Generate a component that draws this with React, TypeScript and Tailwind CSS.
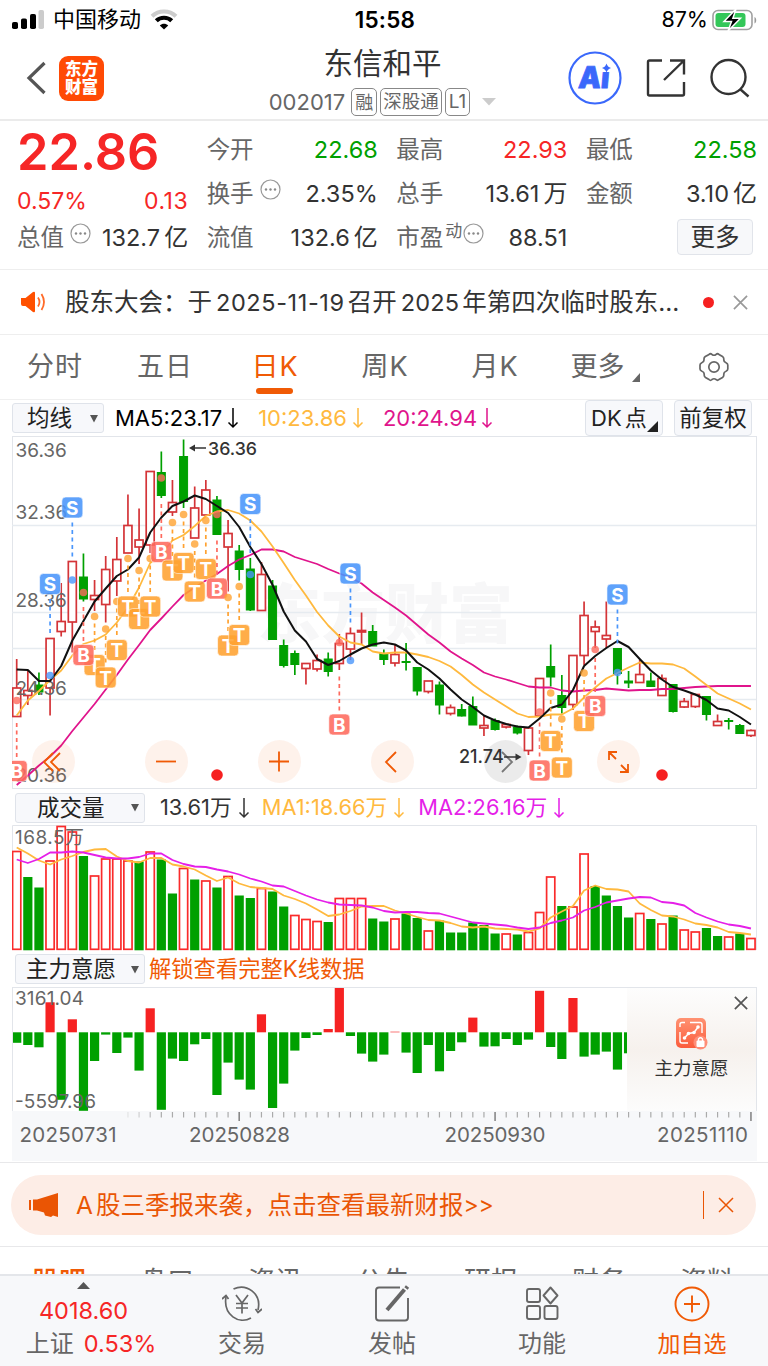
import type { ReactNode } from "react";

type Candle = [high: number, top: number, bottom: number, low: number, up: 0 | 1];

const STEP = 11.125;
const xOf = (i: number) => 16.7 + i * STEP;
const toPoints = (ys: number[]) => ys.map((y, i) => `${xOf(i)},${y}`).join(" ");

const candles: Candle[] = [
  [659, 688, 716.5, 716.5, 1], [670, 690.5, 695.5, 705, 1], [672.5, 685, 692, 695, 0], [638.5, 638.5, 688, 715.5, 1],
  [583, 621.5, 631.5, 636.5, 1], [561, 561.5, 622, 652.5, 1], [553.5, 577, 599, 601.5, 0], [580, 595.5, 599.5, 611, 1],
  [556, 569.5, 604.5, 622.5, 1], [537, 559.5, 581, 596, 1], [494.5, 525.5, 553, 553, 1], [508.5, 540, 547, 564, 1],
  [471.5, 471.5, 545, 553, 1], [451.5, 472.5, 495.5, 498, 0], [480, 502.5, 512, 516, 1], [439.5, 456.5, 501.5, 508, 0],
  [486.5, 508, 538, 538, 1], [480, 490, 515, 515, 1], [496, 500, 534.5, 534.5, 0], [520, 533.5, 547, 591.5, 1],
  [545, 551, 569.5, 580.5, 0], [558, 569, 610, 611, 0], [562, 574.5, 610.5, 610.5, 1], [580, 586, 639.5, 639.5, 0],
  [639.5, 645.5, 665.5, 667.5, 0], [650.5, 653.5, 664.5, 675, 0], [663.5, 663.5, 668.5, 684.5, 1], [654.5, 660.5, 669, 671.5, 1],
  [652.5, 659, 671.5, 676.5, 0], [634, 643.5, 663.5, 670, 1], [627.5, 633.5, 649, 660, 1], [612.5, 630.5, 632, 645, 1],
  [625, 631.5, 646, 646, 0], [649.5, 653.5, 659.5, 665, 0], [644.5, 654.5, 663, 666.5, 1], [643, 661.5, 662.5, 670.5, 0],
  [667, 667.5, 691, 695.5, 0], [681, 681, 691.5, 693.5, 1], [681.5, 685, 705, 714.5, 0], [704.5, 707.5, 713.5, 715.5, 1],
  [704, 709.5, 716, 716.5, 0], [696.5, 706.5, 725, 725, 0], [716, 725.5, 728, 736, 1], [718.5, 720.5, 729.5, 730.5, 0],
  [723.5, 724.5, 727, 728.5, 1], [725.5, 727, 733, 734.5, 0], [727, 728, 750.5, 755, 1], [678.5, 678.5, 716, 716, 1],
  [644.5, 666.5, 677, 686.5, 0], [675, 695.5, 707.5, 713.5, 0], [655.5, 655.5, 704.5, 710, 1], [601.5, 615.5, 655.5, 665, 1],
  [620.5, 627, 631.5, 648, 1], [601.5, 635.5, 639, 648, 1], [648.5, 648.5, 673.5, 684.5, 0], [671, 681, 683, 688, 0],
  [660, 674.5, 682.5, 682.5, 1], [672.5, 681, 686.5, 686.5, 0], [674.5, 678.5, 695.5, 695.5, 1], [684.5, 684.5, 711.5, 712.5, 0],
  [698, 701.5, 707, 708, 1], [694.5, 694.5, 706.5, 708, 1], [696.5, 696.5, 714.5, 720.5, 0], [714.5, 721.5, 725.5, 725.5, 1],
  [718, 720.5, 721.5, 729.5, 0], [724, 725.5, 733.5, 733.5, 0], [729.5, 730.5, 735.5, 737, 1],
];

const ma5 = [
  669.5, 670, 681, 681, 666, 640.5, 621, 601.5, 588.5, 576, 569.5, 557.5, 532.5, 517.5, 506, 501.5, 495.5, 499, 506, 513, 527,
  547, 564, 585, 611.5, 630.5, 641.5, 659, 665, 661, 654.5, 648.5, 644.5, 642.5, 644.5, 650.5, 662.5, 669.5, 678.5, 689.5,
  699.5, 707, 715.5, 720.5, 724, 726.5, 727.5, 718.5, 708, 704.5, 690, 666, 656, 648, 641, 647, 659, 670.5, 679.5, 687, 690.5,
  694.5, 700, 708.5, 710.5, 717, 724.5,
];
const ma10 = [
  715.5, 700.5, 691, 680, 670.5, 655.5, 644, 640.5, 634.5, 622.5, 607.5, 587.5, 563, 554, 540.5, 535, 526, 516, 511.5, 510,
  513.5, 520.5, 531.5, 546.5, 563, 580, 595.5, 612, 625.5, 636.5, 642.5, 644.5, 651.5, 653.5, 652.5, 652.5, 654.5, 657, 661,
  666.5, 675, 684.5, 692.5, 699.5, 706.5, 713.5, 717, 716.5, 714.5, 714.5, 708.5, 697.5, 687.5, 678.5, 673, 667.5, 662.5, 663.5,
  663.5, 664.5, 668.5, 676.5, 685, 693.5, 698.5, 703.5, 709.5,
];
const ma20 = [
  785, 775.5, 765.5, 756.5, 745.5, 731, 717.5, 704, 689.5, 675, 659.5, 645, 630, 618.5, 606.5, 595, 587.5, 580.5, 574, 566,
  559.5, 555, 549.5, 549.5, 551.5, 557, 560.5, 564, 569, 573.5, 577.5, 583.5, 592.5, 600, 607.5, 615.5, 625, 634.5, 642.5,
  651.5, 658.5, 665, 672.5, 676.5, 679.5, 683, 686.5, 687.5, 687.5, 690.5, 691.5, 690.5, 690, 688.5, 689.5, 690.5, 690, 690,
  689, 689, 688, 687, 686.5, 686, 686, 686, 686,
];

// kind, bar index, dot y, badge y
const marks: [string, number, number, number][] = [
  ["B", 0, 700.5, 771], ["T", 7, 616.5, 665], ["T", 8, 629, 677.5], ["T", 9, 601.5, 650], ["T", 10, 558.5, 606.5],
  ["T", 11, 570.5, 619], ["T", 12, 558.5, 606.5], ["B", 6, 592.5, 655], ["B", 13, 478, 552], ["T", 14, 522.5, 570.5],
  ["T", 15, 514.5, 563], ["T", 16, 544, 591.5], ["T", 17, 520.5, 569], ["B", 18, 514.5, 588.5], ["T", 19, 597.5, 645.5],
  ["T", 20, 586.5, 635], ["B", 29, 642.5, 724.5], ["B", 47, 712, 770.5], ["T", 48, 693, 741], ["T", 49, 719, 767.5],
  ["T", 51, 673, 721], ["B", 52, 649.5, 706], ["S", 3, 675.5, 584], ["S", 5, 580, 507.5], ["S", 21, 574.5, 504],
  ["S", 30, 660.5, 573.5], ["S", 54, 672.5, 594.5],
];
const markColors: Record<string, string> = { S: "#4a96fb", B: "#fe6a5e", T: "#ffa231" };

// top of each volume bar, negative when the bar is green
const volumes = [
  851.5, -877, -887.5, 861, 826.5, 832, -856, 876, 859, 859, 861, -861.5, 852, -859.5, -893.5, 868.5, -879.5, 881, -887.5,
  876.5, -895.5, -898, 888.5, -891.5, -906.5, 915.5, 919.5, 921.5, -922, 898.5, 898.5, 898.5, -918.5, -921.5, 919, -913.5,
  -918, 931, -920.5, -932.5, -932.5, -922.5, -925, -933.5, 934, -934.5, 932.5, 912.5, 877, -906, 907, 854, -886, -895.5, -906,
  -917.5, 913.5, -919, 924, -915.5, 930, 932, -928, -936, 937, -933.5, 938.5,
];
const volMa1 = [
  847.5, 853.5, 860.5, 864.5, 859.5, 856, 852, 849.5, 849, 856.5, 861, 862.5, 858, 858, 864.5, 866.5, 869.5, 875.5, 881, 877.5,
  883.5, 887, 888, 889, 895.5, 899, 903.5, 909.5, 916, 914.5, 911, 906.5, 906, 906, 910.5, 913.5, 917, 920, 920.5, 923, 926.5,
  927.5, 926.5, 928.5, 929, 929.5, 931.5, 928.5, 917.5, 911.5, 906, 890.5, 885.5, 889, 889.5, 891.5, 903.5, 910, 915.5, 916.5,
  919.5, 923.5, 925, 927.5, 932, 933, 934.5,
];
const volMa2 = [
  859.5, 863, 859, 852.5, 852.5, 851.5, 852.5, 855, 857.5, 858.5, 858.5, 857, 853.5, 853.5, 860, 864, 866.5, 867, 869.5, 871.5,
  874.5, 878.5, 881.5, 885.5, 886.5, 891, 895.5, 899.5, 902.5, 904.5, 905, 905.5, 907.5, 911, 912.5, 912, 912, 913, 913.5,
  916.5, 919.5, 922.5, 923.5, 924.5, 925.5, 927.5, 929, 927.5, 923, 920.5, 917.5, 910.5, 907, 902.5, 900.5, 898.5, 897, 897.5,
  902, 903, 905.5, 913, 917.5, 921.5, 924.5, 926, 928.5,
];

const flows = [
  -10.5, -12.7, -15, 30, -67.5, 13, -78.5, -28.7, -2.3, -20.7, -5.3, -38.3, 24, -77.5, -26.3, -28.7, -12, -6.7, -62.7, -30.3,
  -47.3, -57.3, 18, -75.7, -51.3, -18.3, -5.7, -2.7, 3.3, 44.5, -3.7, -21.3, -29.3, -22.3, 0.6, -20.3, -40.7, -12.7, -39,
  -18.7, -10, 14.7, -14.3, -14, -6.7, -12.7, -7.3, 41.5, -14.7, -26.7, 34.3, -24.3, -22.3, -19.3, -37.3, -21,
];

function Down() {
  return (
    <svg width="12" height="22" viewBox="0 0 12 22" fill="none" stroke="currentColor" strokeWidth="1.5">
      <path d="M6 1v19M1.5 15.5 6 20l4.5-4.5" />
    </svg>
  );
}

function Dots({ className = "" }: { className?: string }) {
  return (
    <svg className={className} width="21" height="21" viewBox="0 0 21 21">
      <circle cx="10.5" cy="10.5" r="9.5" fill="none" stroke="#999" strokeWidth="1.2" />
      <g fill="#888">
        <circle cx="6" cy="10.5" r="1.2" />
        <circle cx="10.5" cy="10.5" r="1.2" />
        <circle cx="15" cy="10.5" r="1.2" />
      </g>
    </svg>
  );
}

function Cross({ size, color, width = 1.8 }: { size: number; color: string; width?: number }) {
  return (
    <svg width={size} height={size} viewBox="0 0 16 16" fill="none" stroke={color} strokeWidth={width}>
      <path d="M1 1l14 14M15 1L1 15" />
    </svg>
  );
}

function Quote({ label, value, unit, color = "text-[#333]", extra }: { label: string; value: string; unit?: string; color?: string; extra?: ReactNode }) {
  return (
    <div className="flex h-11 items-center justify-between whitespace-nowrap">
      <span className="flex items-center text-[23.5px] text-[#666]">
        {label}
        {extra}
      </span>
      <span className={`text-[23.5px] ${color}`}>
        {value}
        {unit && <span className="ml-[4px] text-[24px]">{unit}</span>}
      </span>
    </div>
  );
}

function Picker({ label, className }: { label: string; className: string }) {
  return (
    <div className={`relative flex h-[30px] items-center rounded-[3px] border border-[#dfe3ea] bg-[#f7f8fb] text-[22.5px] text-[#222] ${className}`}>
      <span>{label}</span>
      <svg className="absolute right-1" width="10" height="9" viewBox="0 0 10 9">
        <path d="M1 1h8L5 8.5z" fill="#555" />
      </svg>
    </div>
  );
}

function StatusBar() {
  return (
    <div className="flex h-[41px] items-center justify-between pb-[2px] pl-3 pr-[10px] text-[22px] text-black">
      <div className="flex w-[240px] items-center">
        <svg width="32" height="19" viewBox="0 0 32 19">
          <rect x="0" y="12" width="6" height="7" rx="1.8" />
          <rect x="9" y="8.5" width="6" height="10.5" rx="1.8" />
          <rect x="18" y="4" width="6" height="15" rx="1.8" />
          <rect x="26.5" y="0" width="5.5" height="19" rx="1.8" fill="#ccc" />
        </svg>
        <span className="ml-[9px]">中国移动</span>
        <svg className="ml-[9px]" width="28" height="21" viewBox="0 0 28 21">
          <path d="M2 7.2C8.5.8 19.5.8 26 7.2" fill="none" stroke="#ccc" strokeWidth="4" />
          <path d="M6.3 11.8c4.2-4.1 11.2-4.1 15.4 0" fill="none" stroke="#000" strokeWidth="4.2" />
          <path d="M9.8 16.4c2.4-2.2 6-2.2 8.4 0L14 20.6z" />
        </svg>
      </div>
      <span className="text-[22.500px] font-semibold tracking-[0.2px]">15:58</span>
      <div className="flex w-[240px] items-center justify-end">
        <span className="text-[21.500px]">87%</span>
        <svg className="ml-[4px]" width="46" height="24" viewBox="0 0 46 24">
          <rect x="1" y="2.5" width="39" height="19" rx="5" fill="none" stroke="#a0a0a0" strokeWidth="1.6" />
          <rect x="3.5" y="5" width="30" height="14" rx="3" fill="#34c759" />
          <path d="M42.5 9v6.5c2.3-.8 2.3-5.7 0-6.5" fill="#999" />
          <path d="M24 1 12 13.5h7.5L16 23l12.5-12.8h-7.6z" stroke="#fff" strokeWidth="1.5" />
        </svg>
      </div>
    </div>
  );
}

function Header() {
  return (
    <header className="flex h-20 justify-between border-b-2 border-[#ebebeb] pl-[26px] pr-[18px]">
      <div className="flex w-[171px] items-center pb-1">
        <svg width="20" height="34" viewBox="0 0 20 34" fill="none" stroke="#555" strokeWidth="3.2">
          <path d="M18.500 2 3 17l15.500 15" />
        </svg>
        <div className="ml-[13px] flex h-[45px] w-[45px] flex-col items-center justify-center rounded-[9px] bg-[#ff4a05] text-[16.5px] font-black leading-[18px] text-white">
          <span>东方</span>
          <span>财富</span>
        </div>
      </div>
      <div className="flex flex-col items-center">
        <div className="h-[45px] text-[29.500px] leading-[44px] text-[#333]">东信和平</div>
        <div className="flex h-[32px] items-center gap-[3px] text-[20px] text-[#666]">
          <span className="mr-[3px] text-[22px]">002017</span>
          <span className="flex h-[28px] items-center rounded-[5px] border border-[#888] px-[3px] text-[18px]">融</span>
          <span className="flex h-[28px] items-center rounded-[5px] border border-[#888] px-[2px] text-[18.500px]">深股通</span>
          <span className="flex h-[28px] items-center rounded-[5px] border border-[#888] px-[3px] text-[19px]">L1</span>
          <svg className="ml-[9px]" width="14" height="8" viewBox="0 0 14 8">
            <path d="M0 0h14L7 7.500z" fill="#ccc" />
          </svg>
        </div>
      </div>
      <div className="flex w-[182px] items-center justify-between pb-1">
        <svg width="54" height="54" viewBox="0 0 54 54">
          <circle cx="27" cy="27" r="25.500" fill="none" stroke="#3a68fb" strokeWidth="2.200" />
          <text x="10.500" y="37.500" fontSize="30" fontWeight="900" fill="#3a68fb" stroke="#3a68fb" strokeWidth="0.800" textLength="31" lengthAdjust="spacingAndGlyphs" transform="skewX(-5) translate(2.500 0)">Ai</text>
          <rect x="31.500" y="12" width="11.500" height="9" fill="#fff" />
          <path d="M38.500 12.500q1 3.500 4.500 4.500-3.500 1-4.500 4.500-1-3.500-4.500-4.500 3.500-1 4.500-4.500" fill="#3a68fb" />
        </svg>
        <svg className="ml-[1px]" width="40" height="40" viewBox="0 0 40 40" fill="none" stroke="#333" strokeWidth="2.400">
          <path d="M16 2.500H3.500q-1.500 0-1.500 1.500v32q0 1.500 1.500 1.500h33q1.500 0 1.500-1.500V24" />
          <path d="M24 2.500h14v14M38 2.500 18 22" />
        </svg>
        <svg width="40" height="40" viewBox="0 0 40 40" fill="none" stroke="#333" strokeWidth="2.400">
          <circle cx="18.500" cy="19" r="17" />
          <path d="M30 31l8.500 7.500" />
        </svg>
      </div>
    </header>
  );
}

function QuotePanel() {
  return (
    <section className="grid h-[149px] grid-cols-4 gap-x-[18.500px] border-b border-[#eee] pb-2 pl-[17px] pr-[11px] pt-[7px]">
      <div className="whitespace-nowrap">
        <div className="h-[50px] text-[50.500px] font-semibold leading-[48px] text-[#f62626]">22.86</div>
        <div className="flex h-[38px] items-end justify-between text-[23px] leading-[30px] text-[#f62626]">
          <span>0.57%</span>
          <span className="tracking-[0.5px]">0.13</span>
        </div>
        <Quote label="总值" value="132.7" unit="亿" extra={<Dots className="mb-[9px] ml-[6px]" />} />
      </div>
      <div>
        <Quote label="今开" value="22.68" color="text-[#00a000]" />
        <Quote label="换手" value="2.35%" extra={<Dots className="mb-[9px] ml-[6px]" />} />
        <Quote label="流值" value="132.6" unit="亿" />
      </div>
      <div>
        <Quote label="最高" value="22.93" color="text-[#f62626]" />
        <Quote label="总手" value="13.61" unit="万" />
        <Quote
          label="市盈"
          value="88.51"
          extra={
            <>
              <span className="mb-[12px] ml-[2px] text-[17px]">动</span>
              <Dots className="mb-[9px] ml-[1px]" />
            </>
          }
        />
      </div>
      <div>
        <Quote label="最低" value="22.58" color="text-[#00a000]" />
        <Quote label="金额" value="3.10" unit="亿" />
        <div className="flex justify-end pr-1 pt-[3px]">
          <button className="flex h-9 w-[76px] items-center justify-center rounded-[4px] border border-[#e1e4ea] bg-[#f7f8fa] text-[24.500px] text-[#333]">更多</button>
        </div>
      </div>
    </section>
  );
}

function NewsLine() {
  return (
    <div className="flex h-[65px] items-center border-b border-[#eee] pl-5 pr-[19px] text-[24.500px] text-[#333]">
      <svg width="26" height="22" viewBox="0 0 26 22">
        <path d="M1 7h4.500L13 1q2-1 2 1v18q0 2-2 1l-7.500-6H3q-2 0-2-2z" fill="#ff5000" />
        <path d="M18 6.500q3 4.500 0 9M21.500 3q5 8 0 16" fill="none" stroke="#ff6a28" strokeWidth="1.800" />
      </svg>
      <div className="ml-[19px] w-[618px] whitespace-nowrap">
        股东大会：于<span className="ml-[4px] mr-[3px] text-[23.500px] tracking-[0.6px]">2025-11-19</span>召开<span className="ml-[4px] mr-[3px] text-[23.500px] tracking-[0.2px]">2025</span>年第四次临时股东...
      </div>
      <span className="ml-5 mr-[19px] h-[11px] w-[11px] shrink-0 rounded-full bg-[#f62020]" />
      <Cross size={15} color="#999" />
    </div>
  );
}

function PeriodTabs() {
  const tabs = ["分时", "五日", "日K", "周K", "月K"];
  return (
    <nav className="flex h-[65px] items-center border-b border-[#f0f0f0] text-[27px] text-[#666]">
      {tabs.map((t) => (
        <div key={t} className={`relative flex h-full w-[110px] items-center justify-center ${t === "日K" ? "text-[#f05a05]" : ""}`}>
          <span className="tracking-[1px]">{t}</span>
          {t === "日K" && <span className="absolute bottom-[5px] left-[36px] h-[6px] w-[37px] rounded-full bg-[#f05a05]" />}
        </div>
      ))}
      <div className="flex h-full w-[110px] items-center justify-center">
        更多
        <svg className="ml-[7px] mt-5" width="8" height="9" viewBox="0 0 8 9">
          <path d="M8 0v9H0z" fill="#666" />
        </svg>
      </div>
      <div className="flex h-full flex-1 items-center justify-center">
        <svg width="32" height="30" viewBox="0 0 32 30" fill="none" stroke="#666" strokeWidth="1.700">
          <path d="M11 2.500q1.500-1.500 3 0 2 1.500 4 0 1.500-1.500 3 0l3.500 2q1.500 1 1.300 3-.2 2.500 2.200 3.300 1.800.8 1.800 2.200v4q0 1.400-1.800 2.200-2.400.8-2.200 3.300.2 2-1.300 3l-3.500 2q-1.500 1.500-3 0-2-1.500-4 0-1.500 1.500-3 0l-3.500-2q-1.500-1-1.300-3 .2-2.500-2.200-3.300Q2 18.400 2 17v-4q0-1.400 1.800-2.200 2.400-.8 2.200-3.300-.2-2 1.300-3z" />
          <circle cx="16" cy="15" r="5.200" />
        </svg>
      </div>
    </nav>
  );
}

function CandleChart() {
  const tools: { left: string; icon: ReactNode; gray?: boolean }[] = [
    { left: "left-[20px]", icon: <path d="M21 13 12 22l9 9M28 13l-9 9 9 9" /> },
    { left: "left-[133px]", icon: <path d="M11 21.500h20" /> },
    { left: "left-[246px]", icon: <path d="M11 21.500h20M21 11.500v20" /> },
    { left: "left-[359px]", icon: <path d="M25 12l-10 10 10 10" /> },
    { left: "left-[472px]", icon: <path d="M18 12l10 10-10 10" />, gray: true },
    { left: "left-[585px]", icon: <path d="M12 20v-8h8M12 12l7 7M31 24v8h-8M31 32l-7-7" /> },
  ];
  return (
    <div className="relative ml-3 h-[354px] w-[745px]">
      <svg className="block" width="745" height="354" viewBox="12 436 745 354">
        <rect x="12.500" y="436.500" width="744" height="352" fill="#fff" stroke="#e2e5ea" />
        <text x="257" y="637" fontSize="64" fontWeight="900" fill="#f7f7f8">东方财富</text>
        <g stroke="#e6ebf0" strokeWidth="1.300">
          <path d="M12 525.500h744M12 612.500h744M12 648.500h744M12 699.500h744" />
        </g>
        {candles.map(([h, t, b, l, up], i) => {
          const x = xOf(i);
          return up ? (
            <g key={i} stroke="#d43438" strokeWidth="1.700" fill="#fff">
              <path d={`M${x} ${h}V${t}M${x} ${b}V${l}`} />
              <rect x={x - 4} y={t} width="8" height={Math.max(b - t, 1)} />
            </g>
          ) : (
            <g key={i} stroke="#00a000" strokeWidth="1.700" fill="#00a000">
              <path d={`M${x} ${h}V${l}`} />
              <rect x={x - 4} y={t} width="8" height={Math.max(b - t, 0.500)} strokeWidth="1" />
            </g>
          );
        })}
        <g fontSize="19" fill="#666">
          <text x="15.500" y="457">36.36</text>
          <text x="15.500" y="519">32.36</text>
          <text x="15.500" y="607">28.36</text>
          <text x="15.500" y="695">24.36</text>
          <text x="15.500" y="782">20.36</text>
        </g>
        <g fill="none" strokeWidth="1.800" strokeLinejoin="round">
          <polyline points={toPoints(ma20)} stroke="#e0148c" />
          <polyline points={toPoints(ma10)} stroke="#ffb93e" />
          <polyline points={toPoints(ma5)} stroke="#111" strokeWidth="2" />
        </g>
        {marks.map(([kind, i, dot, y]) => {
          const x = xOf(i);
          const c = markColors[kind];
          const y1 = kind === "S" ? y + 15 : kind === "T" ? dot + 7 : y - 48;
          const y2 = kind === "S" ? y + 49 : y - 14;
          return (
            <g key={kind + i}>
              <path d={`M${x} ${y1}V${y2}`} stroke={c} strokeWidth="1.700" strokeDasharray="4 3.500" />
              <circle cx={x} cy={dot} r="3.800" fill={c} opacity="0.800" />
              <rect x={x - 10.500} y={y - 10.500} width="21" height="21" rx="4" fill={c} stroke="#fff" strokeOpacity="0.600" opacity="0.880" />
              <text x={x} y={y + 7} fontSize="19" fontWeight="700" textAnchor="middle" fill="#fff">{kind}</text>
            </g>
          );
        })}
        <circle cx="217" cy="775" r="5.800" fill="#f62020" />
        <circle cx="662" cy="775" r="5.800" fill="#f62020" />
        <g fontSize="17.500" fontWeight="500" fill="#333">
          <path d="M206 448h-14" stroke="#333" strokeWidth="1.500" />
          <path d="M189 448l6-3.500v7z" />
          <text x="208" y="454.500" textLength="49" lengthAdjust="spacingAndGlyphs">36.36</text>
        </g>
      </svg>
      {tools.map((t) => (
        <button key={t.left} className={`absolute top-[304px] h-[43px] w-[43px] rounded-full ${t.gray ? "bg-black/[0.08] text-[#777]" : "bg-[#f05a05]/[0.08] text-[#f05a05]"} ${t.left}`}>
          <svg width="43" height="43" viewBox="0 0 43 43" fill="none" stroke="currentColor" strokeWidth="1.800">
            {t.icon}
          </svg>
        </button>
      ))}
      <div className="absolute left-[447px] top-[307px] flex items-center text-[18px] font-medium text-[#333]">
        21.74
        <svg width="18" height="10" viewBox="0 0 18 10">
          <path d="M0 5h13" stroke="#333" strokeWidth="1.500" />
          <path d="M17.500 5l-6-3.500v7z" fill="#333" />
        </svg>
      </div>
    </div>
  );
}

function VolumeChart() {
  return (
    <svg className="ml-3 block" width="745" height="126" viewBox="12 825 745 126">
      <path d="M12.500 950V825.500h744V950" fill="none" stroke="#e2e5ea" />
      {volumes.map((v, i) =>
        v > 0 ? (
          <rect key={i} x={xOf(i) - 4.100} y={v} width="8.200" height={949.300 - v} fill="#fff" stroke="#fa2b2b" strokeWidth="1.700" />
        ) : (
          <rect key={i} x={xOf(i) - 4.600} y={-v} width="9.200" height={950.300 + v} fill="#00a000" />
        )
      )}
      <text x="15" y="844" fontSize="19" fill="#666" textLength="69">168.5万</text>
      <g fill="none" strokeWidth="1.800" strokeLinejoin="round">
        <polyline points={toPoints(volMa1)} stroke="#ffb93e" />
        <polyline points={toPoints(volMa2)} stroke="#e51fe8" />
      </g>
    </svg>
  );
}

function FlowChart() {
  return (
    <div className="flex h-[124px] w-[745px] overflow-hidden border border-b-0 border-[#e2e5ea]">
      <svg className="block shrink-0" width="614" height="124" viewBox="13 988 614 124">
        {flows.map((v, i) => (
          <rect key={i} x={xOf(i) - 4.600} y={v > 0 ? 1032.300 - v : 1032.300} width="9.200" height={Math.abs(v)} fill={v > 0 ? "#f62222" : "#00a000"} />
        ))}
        <text x="15" y="1005" fontSize="19" fill="#666" textLength="69">3161.04</text>
        <text x="15" y="1107.500" fontSize="19" fill="#666" textLength="81">-5597.96</text>
      </svg>
      <div className="relative flex flex-1 flex-col items-center bg-linear-to-b from-[#fdfdfd] via-[#f6f1ed] to-[#fcfcfc] pt-[30px]">
        <span className="absolute right-2 top-2">
          <Cross size={14} color="#555" width={2} />
        </span>
        <svg width="34" height="32" viewBox="0 0 34 32">
          <defs>
            <linearGradient id="lock" x1="0" y1="0" x2="0" y2="1">
              <stop offset="0" stopColor="#ff9272" />
              <stop offset="1" stopColor="#fb5c3c" />
            </linearGradient>
          </defs>
          <rect x="1" y="0" width="30" height="30" rx="5" fill="url(#lock)" />
          <path d="M10 4.500H7q-2 0-2 2V9M15 4.500h10q2 0 2 2V15M5 14v9q0 2 2 2h6" fill="none" stroke="#fff" strokeWidth="1.400" />
          <path d="M9.500 20l4-4.500 5.500-1 4.500-6" fill="none" stroke="#fff" strokeWidth="1.500" />
          <g fill="#fff">
            <circle cx="9.500" cy="20" r="1.800" />
            <circle cx="13.500" cy="15.500" r="1.800" />
            <circle cx="19" cy="14.500" r="1.800" />
            <circle cx="23" cy="9" r="1.800" />
          </g>
          <circle cx="25.500" cy="24.500" r="7" fill="#ff8d76" />
          <rect x="21.500" y="22.500" width="8" height="6.500" rx="1" fill="#fff" />
          <path d="M23.500 23v-2q2-2.500 4 0v2" fill="none" stroke="#fff" strokeWidth="1.300" />
        </svg>
        <span className="mt-[4px] text-[18.500px] leading-7 text-[#333]">主力意愿</span>
      </div>
    </div>
  );
}

function DateAxis() {
  const ticks = Array.from({ length: 57 }, (_, k) => k + 10);
  return (
    <svg className="ml-3 block" width="745" height="51" viewBox="12 1111 745 51">
      <rect x="12" y="1111" width="745" height="50" fill="#f7f8fa" />
      {ticks.map((i) =>
        [20, 43, 66].includes(i) ? (
          <path key={i} d={`M${xOf(i)} 1112v9`} stroke="#888" strokeWidth="1.600" />
        ) : (
          <path key={i} d={`M${xOf(i)} 1112v5.500`} stroke="#aaa" strokeWidth="1.200" opacity={Math.min(1, (i - 9) / 4)} />
        )
      )}
      <g fontSize="20.500" fill="#666">
        <text x="19.500" y="1141.500" textLength="97">20250731</text>
        <text x="189" y="1141.500" textLength="101">20250828</text>
        <text x="444.500" y="1141.500" textLength="101">20250930</text>
        <text x="657" y="1141.500" textLength="91">20251110</text>
      </g>
    </svg>
  );
}

function Banner() {
  return (
    <div className="border-y border-[#e8e8ea] px-3 pb-[11px] pt-3">
      <div className="-ml-px flex h-[60px] items-center rounded-[30px] bg-[#fdede6] pl-[18px] pr-[22px] text-[24.500px] text-[#ea5504]">
        <svg width="30" height="26" viewBox="0 0 30 26" fill="#ea5504">
          <rect x="0" y="8" width="2" height="10" />
          <path d="M4 7.500h4L29 1v24l-5-1.500-2 1.500-6-1.500-1-3L8 18.500H4z" />
        </svg>
        <span className="ml-[17px]">A</span>
        <span className="ml-[3px]">股三季报来袭，点击查看最新财报</span>
        <span className="text-[23px]">&gt;&gt;</span>
        <span className="ml-auto mr-[14px] h-7 w-px bg-[#ea5504]" />
        <Cross size={16} color="#ea5504" width={1.500} />
      </div>
    </div>
  );
}

function BottomNav() {
  return (
    <footer className="flex h-[92px] border-t-2 border-[#e4e6ea] bg-[#f7f8fa] text-[24px] text-[#666]">
      <div className="relative flex w-[167px] flex-col items-center pt-[18px] text-[23.500px] leading-[33px] text-[#f62626]">
        <svg className="absolute left-[77px] top-[6px]" width="13" height="7" viewBox="0 0 13 7">
          <path d="M6.500 0 13 7H0z" fill="#555" />
        </svg>
        <span>4018.60</span>
        <span className="ml-[15px] whitespace-nowrap">
          <span className="mr-[10px] text-[24px] text-[#666]">上证</span>0.53%
        </span>
      </div>
      <div className="flex w-[150px] flex-col items-center pt-[9px]">
        <svg width="40" height="38" viewBox="0 0 40 38" fill="none" stroke="#666" strokeWidth="1.700">
          <path d="M11.500 4C24-2 40 8 36 25M29 33C17 40 1 30 4 12" />
          <path d="M0 14l4-3.500 2.500 3.500M40 24 36 27.500 33.500 24" />
          <path d="M14 10l6 8 6-8M14 18.500h12M14 23h12M20 18v10.500" />
        </svg>
        <span className="leading-[42px]">交易</span>
      </div>
      <div className="flex w-[150px] flex-col items-center pt-[9px]">
        <svg width="36" height="38" viewBox="0 0 36 38" fill="none" stroke="#666" strokeWidth="1.900">
          <path d="M26 2.500H5q-3 0-3 3v27q0 3 3 3h26q3 0 3-3V13" />
          <path d="M30.500 4.500 13 25" strokeWidth="4" />
          <path d="M33.500 1.500l-1.500 2" strokeWidth="4" />
        </svg>
        <span className="leading-[42px]">发帖</span>
      </div>
      <div className="flex w-[150px] flex-col items-center pt-[9px]">
        <svg width="34" height="38" viewBox="0 0 34 38" fill="none" stroke="#666" strokeWidth="1.900">
          <rect x="2" y="4" width="13" height="13" rx="2" />
          <rect x="2" y="21" width="13" height="13" rx="2" />
          <rect x="19.500" y="21" width="13" height="13" rx="2" />
          <path d="M25.500 2.500l7 8-7 8-7-8z" strokeLinejoin="round" />
        </svg>
        <span className="leading-[42px]">功能</span>
      </div>
      <div className="flex w-[150px] flex-col items-center pt-[9px] text-[#f05a05]">
        <svg width="36" height="38" viewBox="0 0 36 38" fill="none" stroke="currentColor" strokeWidth="1.900">
          <circle cx="18" cy="19" r="16.500" />
          <path d="M10 19h16M18 10.500v17" />
        </svg>
        <span className="text-[23px] leading-[42px]">加自选</span>
      </div>
    </footer>
  );
}

export default function App() {
  const sections = ["股吧", "盘口", "资讯", "公告", "研报", "财务", "资料"];
  return (
    <div className="h-[1366px] w-[768px] overflow-hidden bg-white font-['Inter','Noto_Sans_CJK_SC',sans-serif]">
      <StatusBar />
      <Header />
      <QuotePanel />
      <NewsLine />
      <PeriodTabs />

      <div className="flex h-[36px] items-center pl-3 pr-4 text-[22px]">
        <Picker label="均线" className="w-[92px] pl-[14px]" />
        <span className="ml-[11px] flex items-center gap-[5px] text-black">MA5:23.17<Down /></span>
        <span className="ml-[19px] flex items-center gap-[5px] text-[#ffb93e]">10:23.86<Down /></span>
        <span className="ml-[19px] flex items-center gap-[4px] text-[#e0148c]">20:24.94<Down /></span>
        <div className="relative ml-auto flex h-9 w-[78px] items-center rounded-[4px] border border-[#dfe3ea] bg-[#f7f8fb] pl-[5px] text-[#222]">
          DK<span className="ml-[3px]">点</span>
          <svg className="absolute bottom-[3px] right-1" width="11" height="11" viewBox="0 0 11 11">
            <path d="M11 0v11H0z" fill="#222" />
          </svg>
        </div>
        <div className="ml-[11px] flex h-9 w-[78px] items-center justify-center whitespace-nowrap rounded-[4px] border border-[#dfe3ea] bg-[#f7f8fb] text-[22.500px] text-[#222]">前复权</div>
      </div>
      <CandleChart />

      <div className="flex h-[35px] items-center pl-[15px] text-[21.800px]">
        <Picker label="成交量" className="w-[130px] pl-[21px]" />
        <span className="ml-[15px] flex items-center gap-[6px] text-[#333]">13.61万<Down /></span>
        <span className="ml-[12px] flex items-center gap-[6px] text-[#ffb93e]">MA1:18.66万<Down /></span>
        <span className="ml-[13px] flex items-center gap-[6px] text-[#e51fe8]">MA2:26.16万<Down /></span>
      </div>
      <VolumeChart />

      <div className="flex h-[36px] items-center pl-[15px] text-[22.300px]">
        <Picker label="主力意愿" className="w-[130px] pl-[10px]" />
        <span className="ml-1 whitespace-nowrap text-[#f05a05]">解锁查看完整K线数据</span>
      </div>
      <div className="ml-3">
        <FlowChart />
      </div>
      <DateAxis />
      <Banner />

      <div className="flex h-[27px] overflow-hidden pl-[5px] text-[27px] leading-[27px] text-[#666]">
        {sections.map((s, i) => (
          <span key={s} className={`w-[108px] shrink-0 pt-[21px] text-center ${i === 0 ? "font-medium text-[#f05a05]" : ""}`}>{s}</span>
        ))}
      </div>
      <BottomNav />
    </div>
  );
}
